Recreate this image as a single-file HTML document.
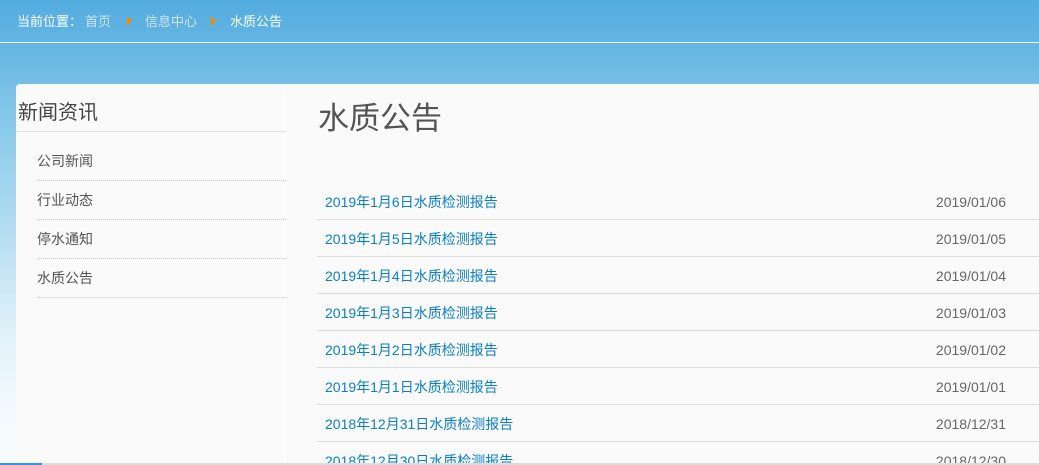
<!DOCTYPE html>
<html><head><meta charset="utf-8"><style>
*{margin:0;padding:0;box-sizing:border-box}
html,body{width:1039px;height:465px;overflow:hidden}
body{font-family:"Liberation Sans","Noto Sans CJK SC",sans-serif;background:linear-gradient(to bottom,#53acdf 0px,#6ab9e4 60px,#82c6e9 110px,#b5ddf2 230px,#e2f2fa 340px,#f6fbfe 430px);position:relative}
.crumb{position:absolute;top:11px;left:17px;font-size:13px;color:#fff;white-space:nowrap}
.crumb span{position:absolute;top:0}
.g{color:#cfe3ef}
.tri{width:0;height:0;border-left:5px solid #f08a00;border-top:5px solid transparent;border-bottom:5px solid transparent;position:absolute;top:5px}
.hl{position:absolute;top:42px;left:0;width:1039px;height:1px;background:#fff}
.box{position:absolute;left:16px;top:84px;width:1023px;height:380px;background:#fafafa;border-top-left-radius:4px}
.side{position:absolute;left:0;top:0;width:270px;height:380px;border-right:2px solid #fff}
.side h2{font-weight:normal;font-size:20px;color:#444;position:absolute;left:2px;top:12px}
.side .bl{position:absolute;left:0;top:47px;width:270px;height:1px;background:#ddd}
.side .it{position:absolute;left:21px;width:249px;height:39px;border-bottom:1px dotted #c8c8c8;font-size:14px;color:#555;line-height:20px}
.title{position:absolute;left:302px;top:9px;font-size:31px;color:#555;font-weight:normal}
.row{position:absolute;left:301px;width:722px;height:37px;border-bottom:1px solid #ddd;font-size:14px}
.row a{position:absolute;left:8px;top:9px;color:#0a7fc6;text-decoration:none}
.row b{position:absolute;right:33px;top:11px;font-weight:normal;color:#666}
.bot{position:absolute;left:0;top:463px;width:1039px;height:2px;background:#ddd}
.bot i{position:absolute;left:0;top:0;width:42px;height:2px;background:#3f8ee8}
</style></head><body>
<div class="crumb"><span style="left:0">当前位置：</span><span class="g" style="left:68px">首页</span><div class="tri" style="left:110px"></div><span class="g" style="left:128px">信息中心</span><div class="tri" style="left:194px"></div><span style="left:213px">水质公告</span></div>
<div class="hl"></div>
<div class="box">
<div class="side"><h2>新闻资讯</h2><div class="bl"></div>
<div class="it" style="top:58px;padding-top:9px">公司新闻</div>
<div class="it" style="top:97px;padding-top:9px">行业动态</div>
<div class="it" style="top:136px;padding-top:9px">停水通知</div>
<div class="it" style="top:175px;padding-top:9px">水质公告</div>
</div>
<div class="title">水质公告</div>
<div class="row" style="top:99px"><a>2019年1月6日水质检测报告</a><b>2019/01/06</b></div>
<div class="row" style="top:136px"><a>2019年1月5日水质检测报告</a><b>2019/01/05</b></div>
<div class="row" style="top:173px"><a>2019年1月4日水质检测报告</a><b>2019/01/04</b></div>
<div class="row" style="top:210px"><a>2019年1月3日水质检测报告</a><b>2019/01/03</b></div>
<div class="row" style="top:247px"><a>2019年1月2日水质检测报告</a><b>2019/01/02</b></div>
<div class="row" style="top:284px"><a>2019年1月1日水质检测报告</a><b>2019/01/01</b></div>
<div class="row" style="top:321px"><a>2018年12月31日水质检测报告</a><b>2018/12/31</b></div>
<div class="row" style="top:358px"><a>2018年12月30日水质检测报告</a><b>2018/12/30</b></div>
</div>
<div class="bot"><i></i></div>
</body></html>
